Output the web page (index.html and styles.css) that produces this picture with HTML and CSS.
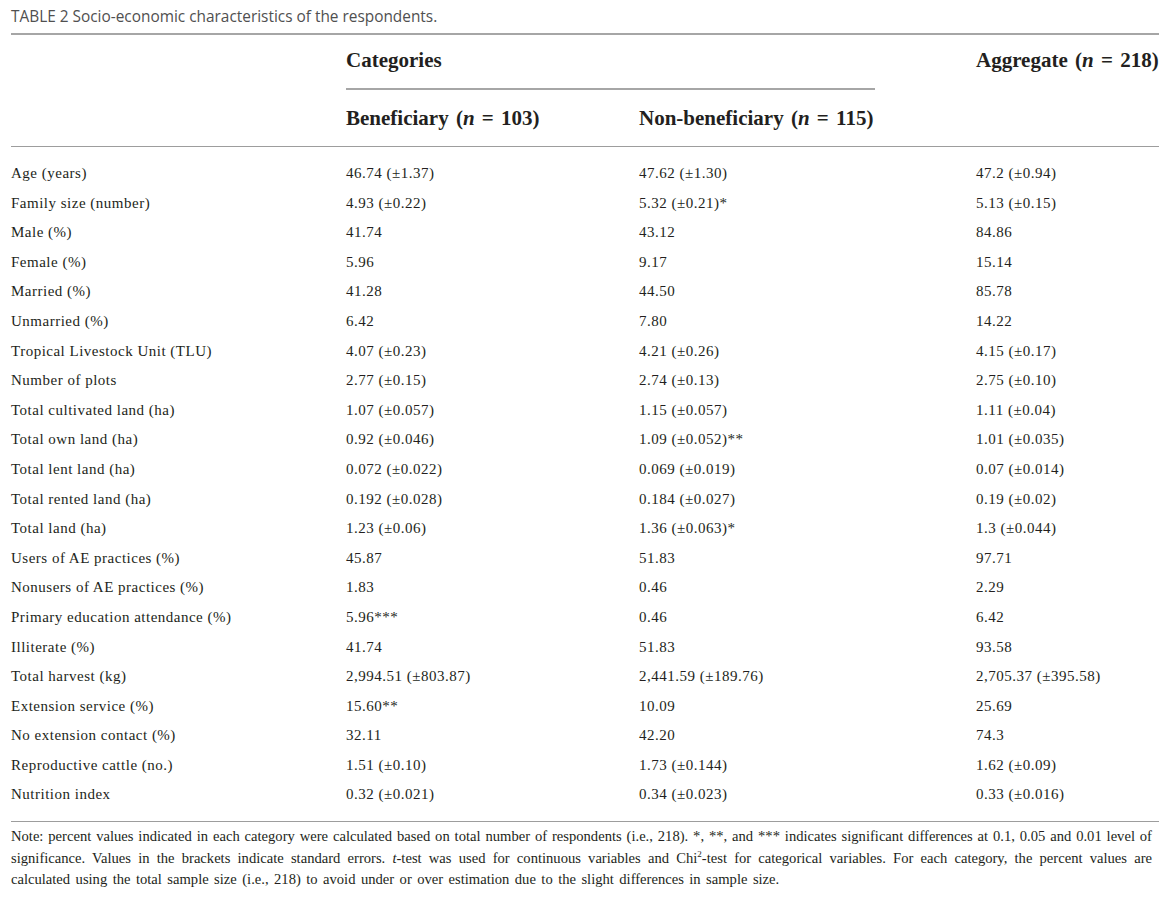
FILE: index.html
```html
<!DOCTYPE html>
<html lang="en">
<head>
<meta charset="utf-8">
<title>Table 2</title>
<link rel="stylesheet" href="styles.css">
</head>
<body>
<div class="page">
  <div class="caption"><span class="tnum">TABLE 2</span> Socio-economic characteristics of the respondents.</div>
  <table class="data">
    <colgroup>
      <col class="c-label">
      <col class="c-ben">
      <col class="c-non">
      <col class="c-agg">
    </colgroup>
    <thead>
      <tr class="h1">
        <th class="lbl" rowspan="2"></th>
        <th class="cat" colspan="2"><div class="cat-inner">Categories</div></th>
        <th class="agg" rowspan="2">Aggregate (<i>n</i> = 218)</th>
      </tr>
      <tr class="h2">
        <th>Beneficiary (<i>n</i> = 103)</th>
        <th>Non-beneficiary (<i>n</i> = 115)</th>
      </tr>
    </thead>
    <tbody>
      <tr class="first"><td>Age (years)</td><td>46.74 (±1.37)</td><td>47.62 (±1.30)</td><td>47.2 (±0.94)</td></tr>
      <tr><td>Family size (number)</td><td>4.93 (±0.22)</td><td>5.32 (±0.21)*</td><td>5.13 (±0.15)</td></tr>
      <tr><td>Male (%)</td><td>41.74</td><td>43.12</td><td>84.86</td></tr>
      <tr><td>Female (%)</td><td>5.96</td><td>9.17</td><td>15.14</td></tr>
      <tr><td>Married (%)</td><td>41.28</td><td>44.50</td><td>85.78</td></tr>
      <tr><td>Unmarried (%)</td><td>6.42</td><td>7.80</td><td>14.22</td></tr>
      <tr><td>Tropical Livestock Unit (TLU)</td><td>4.07 (±0.23)</td><td>4.21 (±0.26)</td><td>4.15 (±0.17)</td></tr>
      <tr><td>Number of plots</td><td>2.77 (±0.15)</td><td>2.74 (±0.13)</td><td>2.75 (±0.10)</td></tr>
      <tr><td>Total cultivated land (ha)</td><td>1.07 (±0.057)</td><td>1.15 (±0.057)</td><td>1.11 (±0.04)</td></tr>
      <tr><td>Total own land (ha)</td><td>0.92 (±0.046)</td><td>1.09 (±0.052)**</td><td>1.01 (±0.035)</td></tr>
      <tr><td>Total lent land (ha)</td><td>0.072 (±0.022)</td><td>0.069 (±0.019)</td><td>0.07 (±0.014)</td></tr>
      <tr><td>Total rented land (ha)</td><td>0.192 (±0.028)</td><td>0.184 (±0.027)</td><td>0.19 (±0.02)</td></tr>
      <tr><td>Total land (ha)</td><td>1.23 (±0.06)</td><td>1.36 (±0.063)*</td><td>1.3 (±0.044)</td></tr>
      <tr><td>Users of AE practices (%)</td><td>45.87</td><td>51.83</td><td>97.71</td></tr>
      <tr><td>Nonusers of AE practices (%)</td><td>1.83</td><td>0.46</td><td>2.29</td></tr>
      <tr><td>Primary education attendance (%)</td><td>5.96***</td><td>0.46</td><td>6.42</td></tr>
      <tr><td>Illiterate (%)</td><td>41.74</td><td>51.83</td><td>93.58</td></tr>
      <tr><td>Total harvest (kg)</td><td>2,994.51 (±803.87)</td><td>2,441.59 (±189.76)</td><td>2,705.37 (±395.58)</td></tr>
      <tr><td>Extension service (%)</td><td>15.60**</td><td>10.09</td><td>25.69</td></tr>
      <tr><td>No extension contact (%)</td><td>32.11</td><td>42.20</td><td>74.3</td></tr>
      <tr><td>Reproductive cattle (no.)</td><td>1.51 (±0.10)</td><td>1.73 (±0.144)</td><td>1.62 (±0.09)</td></tr>
      <tr class="last"><td>Nutrition index</td><td>0.32 (±0.021)</td><td>0.34 (±0.023)</td><td>0.33 (±0.016)</td></tr>
    </tbody>
  </table>
  <div class="note">
    <span class="nl">Note: percent values indicated in each category were calculated based on total number of respondents (i.e., 218). *, **, and *** indicates significant differences at 0.1, 0.05 and 0.01 level of</span>
    <span class="nl">significance. Values in the brackets indicate standard errors. <i>t</i>-test was used for continuous variables and Chi<sup>2</sup>-test for categorical variables. For each category, the percent values are</span>
    <span class="nl end">calculated using the total sample size (i.e., 218) to avoid under or over estimation due to the slight differences in sample size.</span>
  </div>
</div>
</body>
</html>
```

FILE: styles.css
```css
html, body {
  margin: 0;
  padding: 0;
  background: #ffffff;
}

body {
  width: 1159px;
  overflow: hidden;
}

.page {
  padding-left: 11px;
  color: #231f20;
  font-family: "Liberation Serif", "Times New Roman", serif;
}

.caption {
  font-family: "Open Sans", "Liberation Sans", sans-serif;
  font-size: 15.4px;
  font-weight: 500;
  line-height: 22px;
  color: #505050;
  padding-top: 6px;
  padding-bottom: 5px;
  white-space: nowrap;
}

.data {
  width: 1148px;
  table-layout: fixed;
  border-collapse: collapse;
  border-spacing: 0;
  border-top: 2px solid #a6a6a6;
  border-bottom: 1px solid #9d9d9d;
}

.c-label { width: 335px; }
.c-ben { width: 293px; }
.c-non { width: 337px; }
.c-agg { width: 183px; }

.data thead {
  border-bottom: 1px solid #9d9d9d;
}

.data th {
  font-size: 21px;
  font-weight: bold;
  text-align: left;
  line-height: 22px;
  word-spacing: 2px;
  padding: 0;
  white-space: nowrap;
  vertical-align: top;
}

.data th i {
  font-style: italic;
}

.h1 th {
  padding-top: 14px;
}

.cat-inner {
  padding-bottom: 17px;
  border-bottom: 2px solid #a6a6a6;
  margin-right: 101px;
}

.h2 th {
  padding-top: 17px;
  padding-bottom: 17px;
}

.data td {
  font-size: 15px;
  letter-spacing: 0.5px;
  line-height: 29.6px;
  padding: 0;
  white-space: nowrap;
  vertical-align: top;
}

.data tr.first td {
  padding-top: 12px;
}

.data tr.last td {
  padding-bottom: 11px;
}

.note {
  font-size: 14.6px;
  line-height: 21.6px;
  padding-top: 4px;
  padding-right: 7px;
}

.nl {
  display: block;
  text-align: justify;
  text-align-last: justify;
}

.nl.end {
  text-align-last: left;
  word-spacing: 1.8px;
}

.note sup {
  font-size: 9px;
  line-height: 0;
  vertical-align: 6px;
}
```
